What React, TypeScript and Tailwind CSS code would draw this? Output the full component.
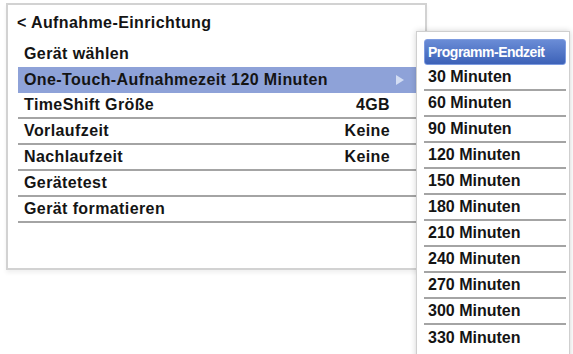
const rows = [
  { label: "Gerät wählen", value: "", line: false },
  { label: "One-Touch-Aufnahmezeit 120 Minuten", value: "", line: false, active: true },
  { label: "TimeShift Größe", value: "4GB", line: true },
  { label: "Vorlaufzeit", value: "Keine", line: true },
  { label: "Nachlaufzeit", value: "Keine", line: true },
  { label: "Gerätetest", value: "", line: true },
  { label: "Gerät formatieren", value: "", line: true },
];

const options = [
  "30 Minuten",
  "60 Minuten",
  "90 Minuten",
  "120 Minuten",
  "150 Minuten",
  "180 Minuten",
  "210 Minuten",
  "240 Minuten",
  "270 Minuten",
  "300 Minuten",
  "330 Minuten",
];

export default function App() {
  return (
    <div className="relative h-[354px] w-[573px] overflow-hidden bg-white font-['Liberation_Sans',Arial,sans-serif] text-[16px] font-bold text-[#141414]">
      {/* main panel */}
      <div className="ml-[6px] mt-[3px] h-[267px] w-[421px] border-2 border-[#d2d2d2] bg-white tracking-[0.4px] shadow-[0_3px_4px_rgba(0,0,0,0.06)]">
        <div className="flex h-[35px] items-center pl-[9px]">&lt; Aufnahme-Einrichtung</div>
        <div className="ml-[10px] mt-[1px] w-[398px]">
          {rows.map((r) => (
            <div
              key={r.label}
              className={`flex h-[26px] items-center justify-between pl-[6px] pr-[26px] ${
                r.line ? "border-b-2 border-[#a4a4a4]" : ""
              } ${r.active ? "bg-[#8ea2d8]" : ""}`}
            >
              <span>{r.label}</span>
              {r.value && <span>{r.value}</span>}
              {r.active && (
                <svg width="8" height="10" viewBox="0 0 8 10" className="-mr-[14px]">
                  <path d="M0 0 L8 5 L0 10 Z" fill="#d3ddf3" />
                </svg>
              )}
            </div>
          ))}
        </div>
      </div>

      {/* popup list */}
      <div className="absolute left-[416px] top-[31px] h-[340px] w-[154px] border border-[#cfcfcf] bg-white pl-[7px] pr-[3px] pt-[7px] shadow-[0_0_6px_rgba(0,0,0,0.18)]">
        <div className="flex h-[26px] items-center whitespace-nowrap rounded-[3px] border border-[#7d9be0] bg-gradient-to-b from-[#6a8cd6] to-[#3d62b8] pl-[3px] text-[14px] tracking-[-0.5px] text-white">
          Programm-Endzeit
        </div>
        {options.map((o, i) => (
          <div
            key={o}
            className={`flex h-[26px] items-center pl-[4px] ${
              i < options.length - 1 ? "border-b-2 border-[#a4a4a4]" : ""
            }`}
          >
            {o}
          </div>
        ))}
      </div>
    </div>
  );
}
